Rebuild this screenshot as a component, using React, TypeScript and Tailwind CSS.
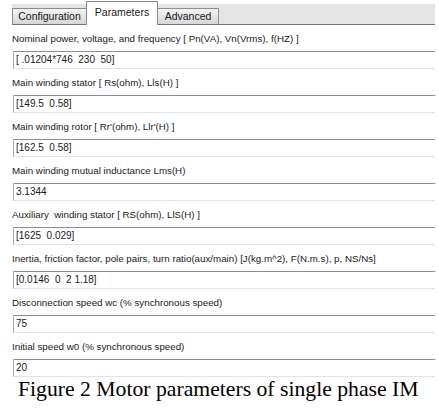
const FIELDS: [string, string][] = [
  ["Nominal power, voltage, and frequency [ Pn(VA), Vn(Vrms), f(HZ) ]", "[ .01204*746  230  50]"],
  ["Main winding stator [ Rs(ohm), Lls(H) ]", "[149.5  0.58]"],
  ["Main winding rotor [ Rr'(ohm), Llr'(H) ]", "[162.5  0.58]"],
  ["Main winding mutual inductance Lms(H)", "3.1344"],
  ["Auxiliary  winding stator [ RS(ohm), LlS(H) ]", "[1625  0.029]"],
  [
    "Inertia, friction factor, pole pairs, turn ratio(aux/main) [J(kg.m^2), F(N.m.s), p, NS/Ns]",
    "[0.0146  0  2 1.18]",
  ],
  ["Disconnection speed wc (% synchronous speed)", "75"],
  ["Initial speed w0 (% synchronous speed)", "20"],
];

const TABS = ["Configuration", "Parameters", "Advanced"];

export default function App() {
  return (
    <div className="h-[418px] w-[439px] overflow-hidden bg-white font-['Liberation_Sans',sans-serif] text-[#1a1a1a]">
      <div className="ml-[12px] w-[423px] overflow-hidden">
        <div className="mt-[2px] flex h-[23px] items-end border-b border-[#74747f] bg-[linear-gradient(#fff_0,#fff_2px,#e4e4e4_2px)] text-[10.5px]">
          {TABS.map((t) =>
            t === "Parameters" ? (
              <div
                key={t}
                className="-mb-px flex h-[24px] w-[72px] items-center justify-center border border-b-0 border-[#8b8b8b] bg-white pb-[2px]"
              >
                {t}
              </div>
            ) : (
              <div
                key={t}
                className={`flex h-[16px] items-center justify-center border border-b-0 border-[#8e8e8e] bg-[linear-gradient(#f4f4f4,#d6d6d6)] ${
                  t === "Configuration" ? "w-[74px] border-r-0" : "w-[61px] border-l-0"
                }`}
              >
                {t}
              </div>
            ),
          )}
        </div>
        {FIELDS.map(([label, value]) => (
          <div key={label} className="flex h-[44px] flex-col first:mt-[-2px]">
            <div className="mt-[7px] h-[13px] whitespace-pre text-[9.75px] leading-[13px]">{label}</div>
            <div className="mt-[6px] ml-px h-[18px] w-[440px] whitespace-pre border border-r-0 border-[#a9a9a9] border-t-[#8d8d8d] border-b-[#dce3ea] pl-[2px] text-[10px] leading-[16px]">
              {value}
            </div>
          </div>
        ))}
      </div>
      <div className="ml-[18px] mt-[0px] font-['Liberation_Serif',serif] text-[21.7px] leading-[24px] text-black">
        Figure 2 Motor parameters of single phase IM
      </div>
    </div>
  );
}
